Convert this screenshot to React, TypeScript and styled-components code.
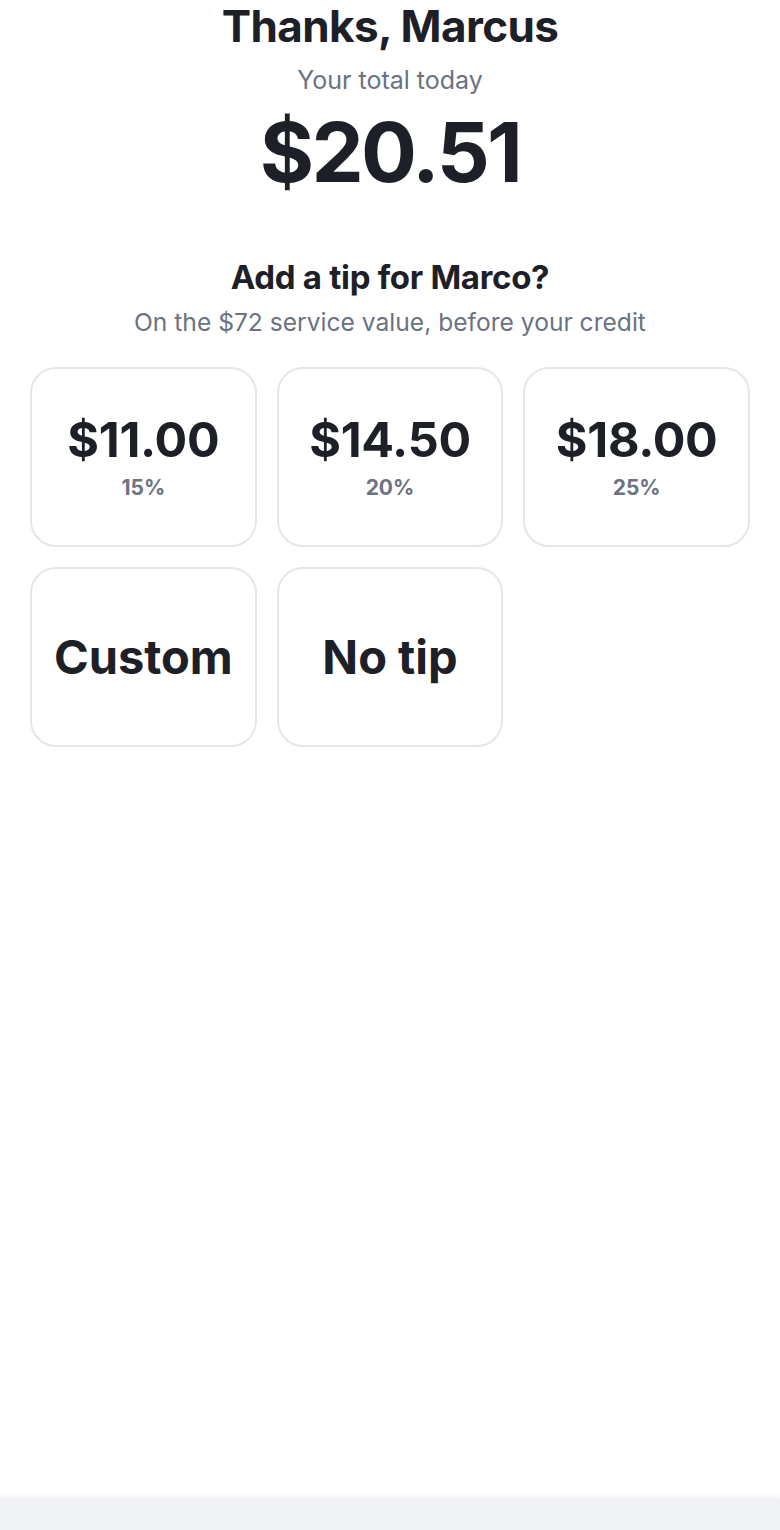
import styled, { createGlobalStyle } from "styled-components";

const GlobalStyle = createGlobalStyle`
  html, body {
    margin: 0;
    padding: 0;
    background: #ffffff;
  }
  body {
    font-family: Inter, "Noto Sans", "Liberation Sans", sans-serif;
    color: #1d2026;
  }
`;

const Screen = styled.div`
  display: flex;
  flex-direction: column;
  min-height: 1530px;
  width: 780px;
`;

const Content = styled.main`
  flex: 1;
  display: flex;
  flex-direction: column;
  align-items: center;
  padding: 0 30px;
`;

const Greeting = styled.h1`
  margin: 0;
  font-size: 44px;
  font-weight: 700;
  line-height: 52px;
  letter-spacing: -0.6px;
`;

const TotalLabel = styled.p`
  margin: 13px 0 0;
  font-size: 25px;
  line-height: 30px;
  color: #6b7280;
`;

const TotalAmount = styled.div`
  margin: 7px 0 0;
  font-size: 83px;
  font-weight: 700;
  line-height: 100px;
  letter-spacing: -2.6px;
`;

const TipTitle = styled.h2`
  margin: 55px 0 0;
  font-size: 33px;
  font-weight: 700;
  line-height: 40px;
  letter-spacing: -0.3px;
`;

const TipSubtitle = styled.p`
  margin: 9px 0 0;
  font-size: 24.6px;
  line-height: 32px;
  color: #6b7280;
`;

const TipGrid = styled.div`
  align-self: stretch;
  margin-top: 29px;
  display: grid;
  grid-template-columns: repeat(3, 1fr);
  grid-auto-rows: 180px;
  gap: 20px;
`;

const TipButton = styled.button`
  display: flex;
  flex-direction: column;
  align-items: center;
  justify-content: center;
  gap: 8px;
  background: #ffffff;
  border: 2px solid #e4e6ea;
  border-radius: 26px;
  font-family: inherit;
  color: #1d2026;
  cursor: pointer;
  padding: 0;
`;

const TipAmount = styled.span<{ $word?: boolean }>`
  font-size: ${(p) => (p.$word ? "47px" : "48.5px")};
  font-weight: 700;
  line-height: 54px;
  letter-spacing: ${(p) => (p.$word ? "0" : "-0.3px")};
`;

const TipPercent = styled.span`
  font-size: 21px;
  font-weight: 700;
  line-height: 26px;
  color: #6b7280;
`;

const BottomBar = styled.div`
  height: 38px;
  background: linear-gradient(#ffffff, #f0f1f3 8px);
`;

const tips = [
  { amount: "$11.00", percent: "15%" },
  { amount: "$14.50", percent: "20%" },
  { amount: "$18.00", percent: "25%" },
];

export default function App() {
  return (
    <>
      <GlobalStyle />
      <Screen>
        <Content>
          <Greeting>Thanks, Marcus</Greeting>
          <TotalLabel>Your total today</TotalLabel>
          <TotalAmount>$20.51</TotalAmount>
          <TipTitle>Add a tip for Marco?</TipTitle>
          <TipSubtitle>On the $72 service value, before your credit</TipSubtitle>
          <TipGrid>
            {tips.map((tip) => (
              <TipButton key={tip.percent}>
                <TipAmount>{tip.amount}</TipAmount>
                <TipPercent>{tip.percent}</TipPercent>
              </TipButton>
            ))}
            <TipButton>
              <TipAmount $word>Custom</TipAmount>
            </TipButton>
            <TipButton>
              <TipAmount $word>No tip</TipAmount>
            </TipButton>
          </TipGrid>
        </Content>
        <BottomBar />
      </Screen>
    </>
  );
}
